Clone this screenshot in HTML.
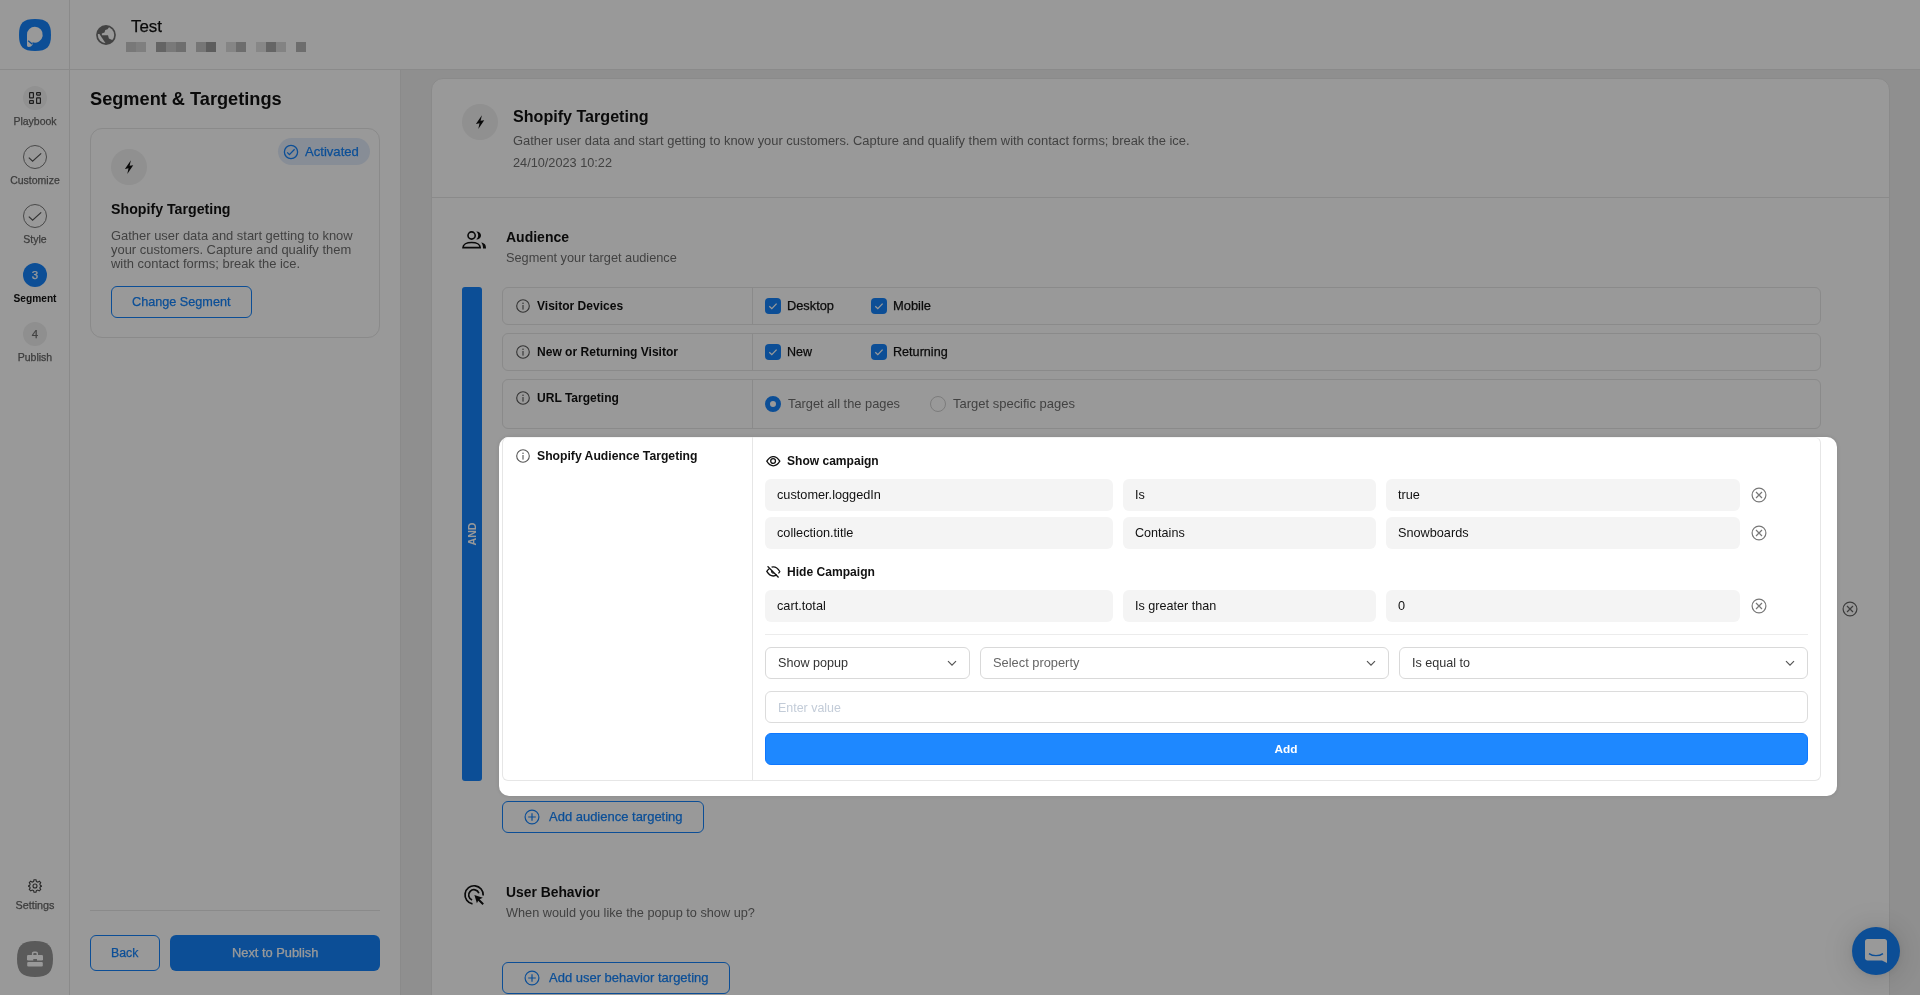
<!DOCTYPE html>
<html><head><meta charset="utf-8"><style>
html,body{margin:0;padding:0;width:1920px;height:995px;overflow:hidden;background:#fff;font-family:"Liberation Sans", sans-serif;}
</style></head><body>
<div style="position:absolute;left:0px;top:69px;width:1920px;height:1px;background:#e6e6e6"></div><div style="position:absolute;left:69px;top:0px;width:1px;height:995px;background:#e6e6e6"></div><div style="position:absolute;left:400px;top:70px;width:1px;height:925px;background:#e6e6e6"></div><div style="position:absolute;left:401px;top:70px;width:1519px;height:925px;background:#efefef"></div><div style="position:absolute;left:431px;top:78px;width:1457px;height:940px;background:#fff;border:1px solid #e6e6e6;border-radius:12px"></div><div style="position:absolute;left:432px;top:197px;width:1457px;height:1px;background:#e6e6e6"></div><svg style="position:absolute;left:19px;top:19px;" width="32" height="32" viewBox="0 0 32 32"><path fill="#1483fb" d="M16 0C28 0 32 4 32 16C32 28 28 32 16 32C4 32 0 28 0 16C0 4 4 0 16 0Z"/><path fill="#fff" d="M15.9 7.8A7.9 7.9 0 1 1 13.4 23.2L13.8 25.4C12.6 27.2 11 28 9.6 27.9C8.6 27.8 8 27.2 8 26.2V15.7A7.9 7.9 0 0 1 15.9 7.8Z"/><path d="M9.2 21.8L13.4 25.2" stroke="#1483fb" stroke-width="1.3" fill="none"/></svg><svg style="position:absolute;left:96px;top:25px;" width="20" height="20" viewBox="0 0 20 20"><defs><clipPath id="gc"><circle cx="10" cy="10" r="8.2"/></clipPath></defs><circle cx="10" cy="10" r="9.9" fill="#717171"/><g clip-path="url(#gc)" fill="#fff"><path d="M13.5 1.6L11.6 4.3L9.3 5.1L8.5 7.4L5.8 8.5L5.9 10.2L12 10.3L12.9 13.6L16.2 14.9L20 14.5V0H14Z"/><path d="M0 8.3L3.1 8.6L9.2 17.7L9 20H0Z"/></g></svg><div style="position:absolute;left:131px;top:27px;line-height:0;font-size:16.9px;font-weight:400;color:#111;white-space:nowrap;will-change:transform;-webkit-text-stroke:0.25px currentColor;">Test</div><div style="position:absolute;left:126px;top:42px;width:10px;height:10px;background:#c8c8c8"></div><div style="position:absolute;left:136px;top:42px;width:10px;height:10px;background:#d4d4d4"></div><div style="position:absolute;left:156px;top:42px;width:10px;height:10px;background:#a7a7a7"></div><div style="position:absolute;left:166px;top:42px;width:10px;height:10px;background:#cacaca"></div><div style="position:absolute;left:176px;top:42px;width:10px;height:10px;background:#b8b8b8"></div><div style="position:absolute;left:196px;top:42px;width:10px;height:10px;background:#c5c5c5"></div><div style="position:absolute;left:206px;top:42px;width:10px;height:10px;background:#9c9c9c"></div><div style="position:absolute;left:226px;top:42px;width:10px;height:10px;background:#dedede"></div><div style="position:absolute;left:236px;top:42px;width:10px;height:10px;background:#b6b6b6"></div><div style="position:absolute;left:256px;top:42px;width:10px;height:10px;background:#e1e1e1"></div><div style="position:absolute;left:266px;top:42px;width:10px;height:10px;background:#a9a9a9"></div><div style="position:absolute;left:276px;top:42px;width:10px;height:10px;background:#dadada"></div><div style="position:absolute;left:296px;top:42px;width:10px;height:10px;background:#b6b6b6"></div><div style="position:absolute;left:23px;top:86px;width:24px;height:24px;background:#f2f2f2;border-radius:50%"></div><svg style="position:absolute;left:29px;top:92px;" width="12" height="12" viewBox="0 0 12 12"><g fill="none" stroke="#333" stroke-width="1.2"><rect x="0.6" y="0.6" width="3.8" height="5.3" rx="0.5"/><rect x="7.6" y="0.6" width="3.8" height="2.5" rx="0.5"/><rect x="0.6" y="8.6" width="3.8" height="2.8" rx="0.5"/><rect x="7.6" y="5.9" width="3.8" height="5.5" rx="0.5"/></g></svg><div style="position:absolute;left:-165px;width:400px;text-align:center;top:121px;line-height:0;font-size:10.5px;font-weight:400;color:#666;white-space:nowrap;will-change:transform;-webkit-text-stroke:0.25px currentColor;">Playbook</div><div style="position:absolute;left:23px;top:145px;width:24px;height:24px;border:1px solid #7a7a7a;border-radius:50%;box-sizing:border-box"></div><svg style="position:absolute;left:27px;top:149px;" width="16" height="16" viewBox="0 0 16 16"><path d="M1.8 8.6L5.6 12.2L14.2 4.4" fill="none" stroke="#555" stroke-width="1.2"/></svg><div style="position:absolute;left:-165px;width:400px;text-align:center;top:180px;line-height:0;font-size:10.5px;font-weight:400;color:#666;white-space:nowrap;will-change:transform;-webkit-text-stroke:0.25px currentColor;">Customize</div><div style="position:absolute;left:23px;top:204px;width:24px;height:24px;border:1px solid #7a7a7a;border-radius:50%;box-sizing:border-box"></div><svg style="position:absolute;left:27px;top:208px;" width="16" height="16" viewBox="0 0 16 16"><path d="M1.8 8.6L5.6 12.2L14.2 4.4" fill="none" stroke="#555" stroke-width="1.2"/></svg><div style="position:absolute;left:-165px;width:400px;text-align:center;top:239px;line-height:0;font-size:10.5px;font-weight:400;color:#666;white-space:nowrap;will-change:transform;-webkit-text-stroke:0.25px currentColor;">Style</div><div style="position:absolute;left:23px;top:263px;width:24px;height:24px;background:#1483fb;border-radius:50%"></div><div style="position:absolute;left:-165px;width:400px;text-align:center;top:275px;line-height:0;font-size:11.5px;font-weight:400;color:#fff;white-space:nowrap;will-change:transform;-webkit-text-stroke:0.25px currentColor;">3</div><div style="position:absolute;left:-165px;width:400px;text-align:center;top:299px;line-height:0;font-size:10.2px;font-weight:700;color:#111;white-space:nowrap;will-change:transform;">Segment</div><div style="position:absolute;left:23px;top:322px;width:24px;height:24px;background:#efefef;border-radius:50%"></div><div style="position:absolute;left:-165px;width:400px;text-align:center;top:334px;line-height:0;font-size:11.5px;font-weight:400;color:#707070;white-space:nowrap;will-change:transform;-webkit-text-stroke:0.25px currentColor;">4</div><div style="position:absolute;left:-165px;width:400px;text-align:center;top:357px;line-height:0;font-size:10.5px;font-weight:400;color:#666;white-space:nowrap;will-change:transform;-webkit-text-stroke:0.25px currentColor;">Publish</div><svg style="position:absolute;left:28px;top:879px;" width="14" height="14" viewBox="0 0 14 14"><g fill="none" stroke="#444" stroke-width="1.1"><circle cx="7" cy="7" r="2"/><path d="M6 0.8H8L8.4 2.5L9.8 3.1L11.3 2.2L12.7 3.6L11.8 5.1L12.4 6.5L14 7V7.2L12.4 7.7L11.8 9L12.7 10.5L11.3 11.9L9.8 11L8.4 11.6L8 13.2H6L5.6 11.6L4.2 11L2.7 11.9L1.3 10.5L2.2 9L1.6 7.6L0.1 7.2V6.8L1.6 6.5L2.2 5.1L1.3 3.6L2.7 2.2L4.2 3.1L5.6 2.5Z"/></g></svg><div style="position:absolute;left:-165px;width:400px;text-align:center;top:905px;line-height:0;font-size:10.8px;font-weight:400;color:#666;white-space:nowrap;will-change:transform;-webkit-text-stroke:0.25px currentColor;">Settings</div><svg style="position:absolute;left:17px;top:941px;" width="36" height="36" viewBox="0 0 36 36"><path fill="#969696" d="M18 0C31 0 36 5 36 18C36 31 31 36 18 36C5 36 0 31 0 18C0 5 5 0 18 0Z"/></svg><svg style="position:absolute;left:27px;top:951px;" width="16" height="16" viewBox="0 0 16 16"><g fill="#fff"><path d="M4.9 4.2V2.4C4.9 1.2 5.7 0.4 6.9 0.4H9C10.2 0.4 11 1.2 11 2.4V4.2H9.6V2.8C9.6 2.2 9.3 1.9 8.7 1.9H7.2C6.6 1.9 6.3 2.2 6.3 2.8V4.2Z"/><rect x="0" y="4" width="16" height="5.6" rx="1.3"/><rect x="0.2" y="10.9" width="15.6" height="4.7" rx="1.1"/></g><rect x="6.3" y="8" width="3.7" height="2.8" fill="#969696"/></svg><div style="position:absolute;left:90px;top:99px;line-height:0;font-size:18.2px;font-weight:700;color:#111;white-space:nowrap;will-change:transform;">Segment &amp; Targetings</div><div style="position:absolute;left:90px;top:128px;width:290px;height:210px;border:1px solid #e6e6e6;border-radius:12px;box-sizing:border-box"></div><div style="position:absolute;left:111px;top:149px;width:36px;height:36px;background:#f0f0f0;border-radius:50%"></div><svg style="position:absolute;left:121px;top:159px;" width="16" height="16" viewBox="0 0 16 16"><path fill="#111" d="M9.9 1.2L3.9 9.9L7.5 9.3L6.3 14.9L12.2 6.3L8.6 6.8Z"/></svg><div style="position:absolute;left:278px;top:138px;width:92px;height:27px;background:#e2ecfa;border-radius:14px"></div><svg style="position:absolute;left:283px;top:144px;" width="16" height="16" viewBox="0 0 16 16"><circle cx="8" cy="8" r="6.6" fill="none" stroke="#1483fb" stroke-width="1.3"/><path d="M4.2 8.4L6.4 10.6L11.6 5.3" fill="none" stroke="#1483fb" stroke-width="1.3"/></svg><div style="position:absolute;left:305px;top:152px;line-height:0;font-size:13.1px;font-weight:400;color:#1483fb;white-space:nowrap;will-change:transform;-webkit-text-stroke:0.25px currentColor;">Activated</div><div style="position:absolute;left:111px;top:209px;line-height:0;font-size:14.2px;font-weight:700;color:#111;white-space:nowrap;will-change:transform;">Shopify Targeting</div><div style="position:absolute;left:111px;top:236px;line-height:0;font-size:12.95px;font-weight:400;color:#6e6e6e;white-space:nowrap;will-change:transform;">Gather user data and start getting to know</div><div style="position:absolute;left:111px;top:250px;line-height:0;font-size:12.95px;font-weight:400;color:#6e6e6e;white-space:nowrap;will-change:transform;">your customers. Capture and qualify them</div><div style="position:absolute;left:111px;top:264px;line-height:0;font-size:12.95px;font-weight:400;color:#6e6e6e;white-space:nowrap;will-change:transform;">with contact forms; break the ice.</div><div style="position:absolute;left:111px;top:286px;width:141px;height:32px;border:1px solid #1483fb;border-radius:6px;box-sizing:border-box"></div><div style="position:absolute;left:132px;top:302px;line-height:0;font-size:12.66px;font-weight:400;color:#1483fb;white-space:nowrap;will-change:transform;-webkit-text-stroke:0.25px currentColor;">Change Segment</div><div style="position:absolute;left:90px;top:910px;width:290px;height:1px;background:#e6e6e6"></div><div style="position:absolute;left:90px;top:935px;width:70px;height:36px;border:1px solid #1483fb;border-radius:6px;box-sizing:border-box"></div><div style="position:absolute;left:111px;top:953px;line-height:0;font-size:12.3px;font-weight:400;color:#1483fb;white-space:nowrap;will-change:transform;-webkit-text-stroke:0.25px currentColor;">Back</div><div style="position:absolute;left:170px;top:935px;width:210px;height:36px;background:#1483fb;border-radius:6px"></div><div style="position:absolute;left:232px;top:953px;line-height:0;font-size:12.85px;font-weight:400;color:#fff;white-space:nowrap;will-change:transform;-webkit-text-stroke:0.25px currentColor;">Next to Publish</div><div style="position:absolute;left:462px;top:104px;width:36px;height:36px;background:#f0f0f0;border-radius:50%"></div><svg style="position:absolute;left:472px;top:114px;" width="16" height="16" viewBox="0 0 16 16"><path fill="#111" d="M9.9 1.2L3.9 9.9L7.5 9.3L6.3 14.9L12.2 6.3L8.6 6.8Z"/></svg><div style="position:absolute;left:513px;top:116px;line-height:0;font-size:16.1px;font-weight:700;color:#111;white-space:nowrap;will-change:transform;">Shopify Targeting</div><div style="position:absolute;left:513px;top:141px;line-height:0;font-size:12.92px;font-weight:400;color:#6e6e6e;white-space:nowrap;will-change:transform;">Gather user data and start getting to know your customers. Capture and qualify them with contact forms; break the ice.</div><div style="position:absolute;left:513px;top:163px;line-height:0;font-size:12.72px;font-weight:400;color:#6e6e6e;white-space:nowrap;will-change:transform;">24/10/2023 10:22</div><svg style="position:absolute;left:462px;top:231px;" width="25" height="18" viewBox="0 0 25 18"><g fill="none" stroke="#111" stroke-width="1.6"><circle cx="9.6" cy="4.5" r="3.6"/><path d="M1 16.6C1 13.5 4.5 11.5 9.6 11.5C14.7 11.5 18.2 13.5 18.2 16.6Z"/></g><path fill="#111" d="M14.2 0.6C17.4 0.6 19 2.5 19 4.5C19 6.6 17.4 8.5 14.2 8.5C15.5 7.4 16.2 6 16.2 4.5C16.2 3 15.5 1.7 14.2 0.6Z"/><path fill="#111" d="M19.2 11.4C22.6 12 24 13.6 24 17.4H21C21 14.8 20.5 12.8 19.2 11.4Z"/></svg><div style="position:absolute;left:506px;top:237px;line-height:0;font-size:14px;font-weight:700;color:#111;white-space:nowrap;will-change:transform;">Audience</div><div style="position:absolute;left:506px;top:258px;line-height:0;font-size:12.76px;font-weight:400;color:#6e6e6e;white-space:nowrap;will-change:transform;">Segment your target audience</div><div style="position:absolute;left:462px;top:287px;width:20px;height:494px;background:#1483fb;border-radius:3px"></div><div style="position:absolute;left:442px;top:528px;width:60px;height:12px;line-height:12px;text-align:center;font-size:10.6px;font-weight:700;color:#fff;transform:rotate(-90deg);will-change:transform">AND</div><div style="position:absolute;left:502px;top:287px;width:1319px;height:38px;border:1px solid #e6e6e6;border-radius:6px;box-sizing:border-box;background:#fff"></div><div style="position:absolute;left:752px;top:288px;width:1px;height:36px;background:#e6e6e6"></div><svg style="position:absolute;left:516px;top:298.5px;" width="14" height="14" viewBox="0 0 14 14"><circle cx="7" cy="7" r="6.3" fill="none" stroke="#555" stroke-width="1.1"/><rect x="6.45" y="6" width="1.1" height="4.6" fill="#555"/><circle cx="7" cy="4.3" r="0.75" fill="#555"/></svg><div style="position:absolute;left:537px;top:306px;line-height:0;font-size:12.05px;font-weight:700;color:#111;white-space:nowrap;will-change:transform;">Visitor Devices</div><div style="position:absolute;left:765px;top:298px;width:16px;height:16px;background:#1483fb;border-radius:4px"></div><svg style="position:absolute;left:765px;top:298px;" width="16" height="16" viewBox="0 0 16 16"><path d="M4.3 8.2L6.8 10.6L11.6 5.6" fill="none" stroke="#fff" stroke-width="1.3"/></svg><div style="position:absolute;left:787px;top:306px;line-height:0;font-size:12.81px;font-weight:400;color:#111;white-space:nowrap;will-change:transform;-webkit-text-stroke:0.25px currentColor;">Desktop</div><div style="position:absolute;left:871px;top:298px;width:16px;height:16px;background:#1483fb;border-radius:4px"></div><svg style="position:absolute;left:871px;top:298px;" width="16" height="16" viewBox="0 0 16 16"><path d="M4.3 8.2L6.8 10.6L11.6 5.6" fill="none" stroke="#fff" stroke-width="1.3"/></svg><div style="position:absolute;left:893px;top:306px;line-height:0;font-size:12.9px;font-weight:400;color:#111;white-space:nowrap;will-change:transform;-webkit-text-stroke:0.25px currentColor;">Mobile</div><div style="position:absolute;left:502px;top:333px;width:1319px;height:38px;border:1px solid #e6e6e6;border-radius:6px;box-sizing:border-box;background:#fff"></div><div style="position:absolute;left:752px;top:334px;width:1px;height:36px;background:#e6e6e6"></div><svg style="position:absolute;left:516px;top:344.5px;" width="14" height="14" viewBox="0 0 14 14"><circle cx="7" cy="7" r="6.3" fill="none" stroke="#555" stroke-width="1.1"/><rect x="6.45" y="6" width="1.1" height="4.6" fill="#555"/><circle cx="7" cy="4.3" r="0.75" fill="#555"/></svg><div style="position:absolute;left:537px;top:352px;line-height:0;font-size:12.05px;font-weight:700;color:#111;white-space:nowrap;will-change:transform;">New or Returning Visitor</div><div style="position:absolute;left:765px;top:344px;width:16px;height:16px;background:#1483fb;border-radius:4px"></div><svg style="position:absolute;left:765px;top:344px;" width="16" height="16" viewBox="0 0 16 16"><path d="M4.3 8.2L6.8 10.6L11.6 5.6" fill="none" stroke="#fff" stroke-width="1.3"/></svg><div style="position:absolute;left:787px;top:352px;line-height:0;font-size:12.5px;font-weight:400;color:#111;white-space:nowrap;will-change:transform;-webkit-text-stroke:0.25px currentColor;">New</div><div style="position:absolute;left:871px;top:344px;width:16px;height:16px;background:#1483fb;border-radius:4px"></div><svg style="position:absolute;left:871px;top:344px;" width="16" height="16" viewBox="0 0 16 16"><path d="M4.3 8.2L6.8 10.6L11.6 5.6" fill="none" stroke="#fff" stroke-width="1.3"/></svg><div style="position:absolute;left:893px;top:352px;line-height:0;font-size:12.62px;font-weight:400;color:#111;white-space:nowrap;will-change:transform;-webkit-text-stroke:0.25px currentColor;">Returning</div><div style="position:absolute;left:502px;top:379px;width:1319px;height:50px;border:1px solid #e6e6e6;border-radius:6px;box-sizing:border-box;background:#fff"></div><div style="position:absolute;left:752px;top:380px;width:1px;height:48px;background:#e6e6e6"></div><svg style="position:absolute;left:516px;top:390.5px;" width="14" height="14" viewBox="0 0 14 14"><circle cx="7" cy="7" r="6.3" fill="none" stroke="#555" stroke-width="1.1"/><rect x="6.45" y="6" width="1.1" height="4.6" fill="#555"/><circle cx="7" cy="4.3" r="0.75" fill="#555"/></svg><div style="position:absolute;left:537px;top:398px;line-height:0;font-size:12.05px;font-weight:700;color:#111;white-space:nowrap;will-change:transform;">URL Targeting</div><div style="position:absolute;left:765px;top:396px;width:16px;height:16px;background:#fff;border:5px solid #1483fb;border-radius:50%;box-sizing:border-box"></div><div style="position:absolute;left:788px;top:404px;line-height:0;font-size:12.83px;font-weight:400;color:#6e6e6e;white-space:nowrap;will-change:transform;">Target all the pages</div><div style="position:absolute;left:930px;top:396px;width:16px;height:16px;background:#fff;border:1px solid #cfcfcf;border-radius:50%;box-sizing:border-box"></div><div style="position:absolute;left:953px;top:404px;line-height:0;font-size:12.99px;font-weight:400;color:#6e6e6e;white-space:nowrap;will-change:transform;">Target specific pages</div><div style="position:absolute;left:502px;top:439px;width:1319px;height:342px;border:1px solid #e6e6e6;border-radius:6px;box-sizing:border-box;background:#fff"></div><svg style="position:absolute;left:1842px;top:601px;" width="16" height="16" viewBox="0 0 16 16"><g fill="none" stroke="#666" stroke-width="1.2"><circle cx="8" cy="8" r="6.9"/><path d="M5 5L11 11M11 5L5 11"/></g></svg><div style="position:absolute;left:502px;top:801px;width:202px;height:32px;border:1px solid #1483fb;border-radius:6px;box-sizing:border-box"></div><svg style="position:absolute;left:524px;top:809px;" width="16" height="16" viewBox="0 0 16 16"><g fill="none" stroke="#1483fb" stroke-width="1.2"><circle cx="8" cy="8" r="6.9"/><path d="M8 4.2V11.8M4.2 8H11.8"/></g></svg><div style="position:absolute;left:549px;top:817px;line-height:0;font-size:12.99px;font-weight:400;color:#1483fb;white-space:nowrap;will-change:transform;-webkit-text-stroke:0.25px currentColor;">Add audience targeting</div><svg style="position:absolute;left:462px;top:883px;" width="24" height="24" viewBox="0 0 24 24"><g fill="none" stroke="#111" stroke-width="1.7"><path d="M10.5 20.8A9.1 9.1 0 1 1 21.2 12.5"/><path d="M10.1 17A5.3 5.3 0 1 1 16.9 10.2"/></g><path fill="#111" d="M12.4 12.1L20.8 14.8L17.6 16.3L21.9 20.6L20.5 22L16.2 17.7L14.9 20.3Z"/></svg><div style="position:absolute;left:506px;top:892px;line-height:0;font-size:13.86px;font-weight:700;color:#111;white-space:nowrap;will-change:transform;">User Behavior</div><div style="position:absolute;left:506px;top:913px;line-height:0;font-size:12.72px;font-weight:400;color:#6e6e6e;white-space:nowrap;will-change:transform;">When would you like the popup to show up?</div><div style="position:absolute;left:502px;top:962px;width:228px;height:32px;border:1px solid #1483fb;border-radius:6px;box-sizing:border-box"></div><svg style="position:absolute;left:524px;top:970px;" width="16" height="16" viewBox="0 0 16 16"><g fill="none" stroke="#1483fb" stroke-width="1.2"><circle cx="8" cy="8" r="6.9"/><path d="M8 4.2V11.8M4.2 8H11.8"/></g></svg><div style="position:absolute;left:549px;top:978px;line-height:0;font-size:12.99px;font-weight:400;color:#1483fb;white-space:nowrap;will-change:transform;-webkit-text-stroke:0.25px currentColor;">Add user behavior targeting</div><div style="position:absolute;left:1852px;top:927px;width:48px;height:48px;background:#1483fb;border-radius:50%;box-shadow:0 1px 6px rgba(0,0,0,0.06),0 2px 32px rgba(0,0,0,0.16)"></div><svg style="position:absolute;left:1865px;top:939px;" width="22" height="24" viewBox="0 0 22 24"><path fill="#fff" d="M2.5 0H19.5C20.9 0 22 1.1 22 2.5V24L17 21.6H2.5C1.1 21.6 0 20.5 0 19.1V2.5C0 1.1 1.1 0 2.5 0Z"/><path d="M4 14.6C8 17.4 14 17.4 18 14.6" fill="none" stroke="#1483fb" stroke-width="1.3"/></svg><div style="position:absolute;left:0px;top:0px;width:1920px;height:995px;background:rgba(0,0,0,0.4)"></div><div style="position:absolute;left:499px;top:437px;width:1338px;height:359px;background:#fff;border-radius:10px;box-shadow:0 0 5px rgba(0,0,0,0.12)"></div><div style="position:absolute;left:502px;top:437px;width:1319px;height:344px;border:1px solid #e6e6e6;border-top-color:#f4f4f4;border-radius:6px;box-sizing:border-box"></div><div style="position:absolute;left:752px;top:437px;width:1px;height:343px;background:#e6e6e6"></div><svg style="position:absolute;left:516px;top:449px;" width="14" height="14" viewBox="0 0 14 14"><circle cx="7" cy="7" r="6.3" fill="none" stroke="#555" stroke-width="1.1"/><rect x="6.45" y="6" width="1.1" height="4.6" fill="#555"/><circle cx="7" cy="4.3" r="0.75" fill="#555"/></svg><div style="position:absolute;left:537px;top:456px;line-height:0;font-size:12.19px;font-weight:700;color:#111;white-space:nowrap;will-change:transform;">Shopify Audience Targeting</div><svg style="position:absolute;left:766px;top:456px;" width="15" height="12" viewBox="0 0 15 12"><g fill="none" stroke="#111" stroke-width="1.3"><path d="M0.8 5.2C2.8 1.9 5 0.6 7.3 0.6C9.6 0.6 11.8 1.9 13.8 5.2C11.8 8.5 9.6 9.8 7.3 9.8C5 9.8 2.8 8.5 0.8 5.2Z"/><circle cx="7.1" cy="5" r="2.4"/></g></svg><div style="position:absolute;left:787px;top:461px;line-height:0;font-size:12.05px;font-weight:700;color:#111;white-space:nowrap;will-change:transform;">Show campaign</div><div style="position:absolute;left:765px;top:479px;width:348px;height:32px;background:#f4f4f4;border-radius:6px"></div><div style="position:absolute;left:1123px;top:479px;width:253px;height:32px;background:#f4f4f4;border-radius:6px"></div><div style="position:absolute;left:1386px;top:479px;width:354px;height:32px;background:#f4f4f4;border-radius:6px"></div><div style="position:absolute;left:777px;top:495px;line-height:0;font-size:12.73px;font-weight:400;color:#111;white-space:nowrap;will-change:transform;">customer.loggedIn</div><div style="position:absolute;left:1135px;top:495px;line-height:0;font-size:12.6px;font-weight:400;color:#111;white-space:nowrap;will-change:transform;">Is</div><div style="position:absolute;left:1398px;top:495px;line-height:0;font-size:12.7px;font-weight:400;color:#111;white-space:nowrap;will-change:transform;">true</div><svg style="position:absolute;left:1751px;top:487px;" width="16" height="16" viewBox="0 0 16 16"><g fill="none" stroke="#777" stroke-width="1.2"><circle cx="8" cy="8" r="6.9"/><path d="M5 5L11 11M11 5L5 11"/></g></svg><div style="position:absolute;left:765px;top:517px;width:348px;height:32px;background:#f4f4f4;border-radius:6px"></div><div style="position:absolute;left:1123px;top:517px;width:253px;height:32px;background:#f4f4f4;border-radius:6px"></div><div style="position:absolute;left:1386px;top:517px;width:354px;height:32px;background:#f4f4f4;border-radius:6px"></div><div style="position:absolute;left:777px;top:533px;line-height:0;font-size:12.73px;font-weight:400;color:#111;white-space:nowrap;will-change:transform;">collection.title</div><div style="position:absolute;left:1135px;top:533px;line-height:0;font-size:12.6px;font-weight:400;color:#111;white-space:nowrap;will-change:transform;">Contains</div><div style="position:absolute;left:1398px;top:533px;line-height:0;font-size:12.7px;font-weight:400;color:#111;white-space:nowrap;will-change:transform;">Snowboards</div><svg style="position:absolute;left:1751px;top:525px;" width="16" height="16" viewBox="0 0 16 16"><g fill="none" stroke="#777" stroke-width="1.2"><circle cx="8" cy="8" r="6.9"/><path d="M5 5L11 11M11 5L5 11"/></g></svg><svg style="position:absolute;left:766px;top:566px;" width="15" height="12" viewBox="0 0 15 12"><g fill="none" stroke="#111" stroke-width="1.3"><path d="M3.2 2.7C2.3 3.4 1.5 4.3 0.8 5.4C2.8 8.7 5 10 7.3 10C8.6 10 9.8 9.6 11 8.8M5.6 1.2C6.2 1 6.7 0.9 7.3 0.9C9.6 0.9 11.8 2.2 13.8 5.5C13.4 6.2 12.9 6.9 12.4 7.4"/><path d="M5.8 4.8C5.4 6 6.2 7.3 7.6 7.3"/><path d="M1.6 0.3L12.6 11.5"/></g></svg><div style="position:absolute;left:787px;top:572px;line-height:0;font-size:12.09px;font-weight:700;color:#111;white-space:nowrap;will-change:transform;">Hide Campaign</div><div style="position:absolute;left:765px;top:590px;width:348px;height:32px;background:#f4f4f4;border-radius:6px"></div><div style="position:absolute;left:1123px;top:590px;width:253px;height:32px;background:#f4f4f4;border-radius:6px"></div><div style="position:absolute;left:1386px;top:590px;width:354px;height:32px;background:#f4f4f4;border-radius:6px"></div><div style="position:absolute;left:777px;top:606px;line-height:0;font-size:12.73px;font-weight:400;color:#111;white-space:nowrap;will-change:transform;">cart.total</div><div style="position:absolute;left:1135px;top:606px;line-height:0;font-size:12.6px;font-weight:400;color:#111;white-space:nowrap;will-change:transform;">Is greater than</div><div style="position:absolute;left:1398px;top:606px;line-height:0;font-size:12.7px;font-weight:400;color:#111;white-space:nowrap;will-change:transform;">0</div><svg style="position:absolute;left:1751px;top:598px;" width="16" height="16" viewBox="0 0 16 16"><g fill="none" stroke="#777" stroke-width="1.2"><circle cx="8" cy="8" r="6.9"/><path d="M5 5L11 11M11 5L5 11"/></g></svg><div style="position:absolute;left:765px;top:634px;width:1043px;height:1px;background:#ececec"></div><div style="position:absolute;left:765px;top:647px;width:205px;height:32px;border:1px solid #d9d9d9;border-radius:6px;box-sizing:border-box;background:#fff"></div><div style="position:absolute;left:778px;top:663px;line-height:0;font-size:12.6px;font-weight:400;color:#333;white-space:nowrap;will-change:transform;">Show popup</div><svg style="position:absolute;left:946px;top:657px;" width="12" height="12" viewBox="0 0 12 12"><path d="M2 4.2L6 8.2L10 4.2" fill="none" stroke="#555" stroke-width="1.2"/></svg><div style="position:absolute;left:980px;top:647px;width:409px;height:32px;border:1px solid #d9d9d9;border-radius:6px;box-sizing:border-box;background:#fff"></div><div style="position:absolute;left:993px;top:663px;line-height:0;font-size:12.85px;font-weight:400;color:#666;white-space:nowrap;will-change:transform;">Select property</div><svg style="position:absolute;left:1365px;top:657px;" width="12" height="12" viewBox="0 0 12 12"><path d="M2 4.2L6 8.2L10 4.2" fill="none" stroke="#555" stroke-width="1.2"/></svg><div style="position:absolute;left:1399px;top:647px;width:409px;height:32px;border:1px solid #d9d9d9;border-radius:6px;box-sizing:border-box;background:#fff"></div><div style="position:absolute;left:1412px;top:663px;line-height:0;font-size:12.6px;font-weight:400;color:#333;white-space:nowrap;will-change:transform;">Is equal to</div><svg style="position:absolute;left:1784px;top:657px;" width="12" height="12" viewBox="0 0 12 12"><path d="M2 4.2L6 8.2L10 4.2" fill="none" stroke="#555" stroke-width="1.2"/></svg><div style="position:absolute;left:765px;top:691px;width:1043px;height:32px;border:1px solid #dcdcdc;border-radius:6px;box-sizing:border-box;background:#fff"></div><div style="position:absolute;left:778px;top:708px;line-height:0;font-size:12.45px;font-weight:400;color:#c3ccd8;white-space:nowrap;will-change:transform;">Enter value</div><div style="position:absolute;left:765px;top:733px;width:1043px;height:32px;background:#1e88ff;border:1px solid #0f78ff;border-radius:6px;box-sizing:border-box"></div><div style="position:absolute;left:1086px;width:400px;text-align:center;top:749px;line-height:0;font-size:11.83px;font-weight:700;color:#fff;white-space:nowrap;will-change:transform;">Add</div>
</body></html>
